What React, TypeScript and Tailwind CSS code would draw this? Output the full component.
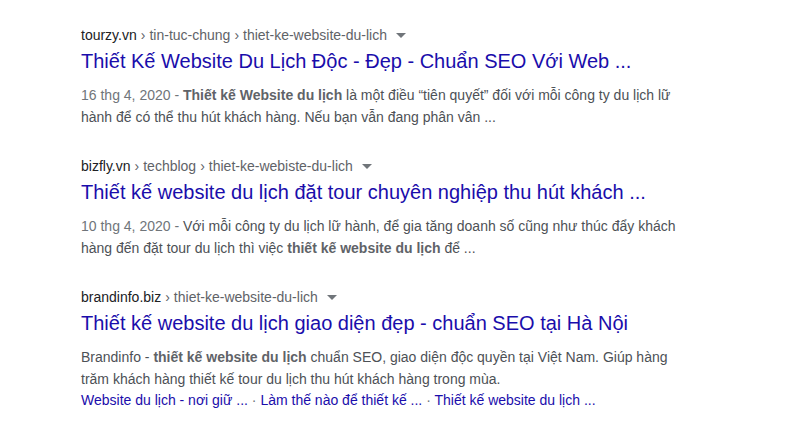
import React from "react";

type Result = {
  domain: string;
  path: string[];
  title: string;
  snippet: React.ReactNode;
  links?: string[];
};

const results: Result[] = [
  {
    domain: "tourzy.vn",
    path: ["tin-tuc-chung", "thiet-ke-website-du-lich"],
    title: "Thiết Kế Website Du Lịch Độc - Đẹp - Chuẩn SEO Với Web ...",
    snippet: (
      <>
        <span className="text-[#70757a]">16 thg 4, 2020 - </span>
        <b className="font-bold text-[#5f6368]">Thiết kế Website du lịch</b> là một điều “tiên quyết” đối với mỗi công ty du lịch lữ hành để có thể thu hút khách hàng. Nếu bạn vẫn đang phân vân ...
      </>
    ),
  },
  {
    domain: "bizfly.vn",
    path: ["techblog", "thiet-ke-webiste-du-lich"],
    title: "Thiết kế website du lịch đặt tour chuyên nghiệp thu hút khách ...",
    snippet: (
      <>
        <span className="text-[#70757a]">10 thg 4, 2020 - </span>
        Với mỗi công ty du lịch lữ hành, để gia tăng doanh số cũng như thúc đẩy khách hàng đến đặt tour du lịch thì việc{" "}
        <b className="font-bold text-[#5f6368]">thiết kế website du lịch</b> để ...
      </>
    ),
  },
  {
    domain: "brandinfo.biz",
    path: ["thiet-ke-website-du-lich"],
    title: "Thiết kế website du lịch giao diện đẹp - chuẩn SEO tại Hà Nội",
    snippet: (
      <>
        Brandinfo - <b className="font-bold text-[#5f6368]">thiết kế website du lịch</b> chuẩn SEO, giao diện độc quyền tại Việt Nam. Giúp hàng trăm khách hàng thiết kế tour du lịch thu hút khách hàng trong mùa.
      </>
    ),
    links: ["Website du lịch - nơi giữ ...", "Làm thế nào để thiết kế ...", "Thiết kế website du lịch ..."],
  },
];

function Caret() {
  return (
    <svg width="10" height="5" viewBox="0 0 10 5" className="inline-block align-middle ml-[9px] mb-[2px]">
      <path d="M0 0h10L5 5z" fill="#70757a" />
    </svg>
  );
}

export default function App() {
  return (
    <div
      className="w-[807px] h-[435px] bg-white overflow-hidden pl-[81px] pt-[25px]"
      style={{ fontFamily: '"Liberation Sans", Arial, sans-serif' }}
    >
      <div className="flex flex-col gap-[28px] w-[600px]">
        {results.map((r) => (
          <div key={r.domain}>
            <div className="h-[20px] text-[14px] leading-[20px] whitespace-nowrap">
              <span className="text-[#202124]">{r.domain}</span>
              {r.path.map((p) => (
                <span key={p} className="text-[#5f6368]">
                  <span className="mx-[4px]">›</span>
                  {p}
                </span>
              ))}
              <Caret />
            </div>
            <h3 className="mt-[3px] text-[20px] leading-[26px] text-[#1a0dab] whitespace-nowrap">{r.title}</h3>
            <div className="mt-[10px] text-[14px] leading-[22px] text-[#4d5156] w-[595px]">{r.snippet}</div>
            {r.links && (
              <div className="text-[14px] leading-[20px] text-[#1a0dab]">
                {r.links.map((l, i) => (
                  <span key={l}>
                    {i > 0 && <span className="text-[#70757a]"> · </span>}
                    {l}
                  </span>
                ))}
              </div>
            )}
          </div>
        ))}
      </div>
    </div>
  );
}
